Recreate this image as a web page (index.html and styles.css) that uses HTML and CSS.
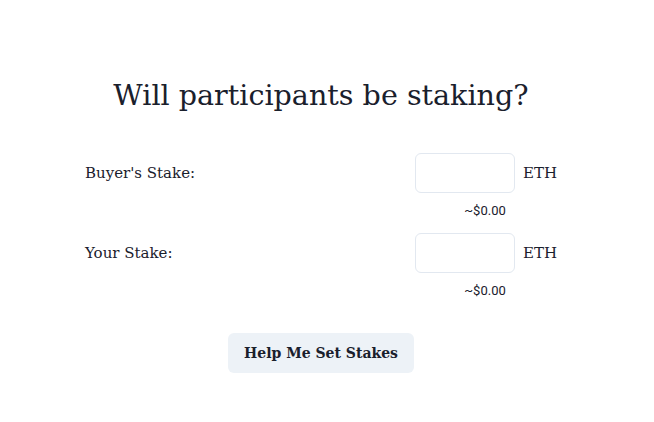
FILE: index.html
```html
<!DOCTYPE html>
<html>
<head>
<meta charset="utf-8">
<link rel="stylesheet" href="styles.css">
</head>
<body>
<main class="page">
  <h1 class="title">Will participants be staking?</h1>
  <div class="rows">
    <div class="row">
      <div class="label">Buyer's Stake:</div>
      <div class="field">
        <div class="input-line">
          <input class="input" type="text">
          <span class="unit">ETH</span>
        </div>
        <div class="usd">~$0.00</div>
      </div>
    </div>
    <div class="row">
      <div class="label">Your Stake:</div>
      <div class="field">
        <div class="input-line">
          <input class="input" type="text">
          <span class="unit">ETH</span>
        </div>
        <div class="usd">~$0.00</div>
      </div>
    </div>
  </div>
  <div class="actions">
    <button class="btn">Help Me Set Stakes</button>
  </div>
</main>
</body>
</html>
```

FILE: styles.css
```css
* { box-sizing: border-box; }
html, body { margin: 0; padding: 0; background: #fff; }
body {
  font-family: "DejaVu Serif", "Liberation Serif", serif;
  color: #1a202c;
  width: 642px;
}
.page {
  display: flex;
  flex-direction: column;
  align-items: center;
  padding-top: 74px;
}
.title {
  margin: 0;
  font-weight: 400;
  font-size: 28.6px;
  line-height: 42px;
  letter-spacing: 0;
}
.rows {
  width: 472px;
  margin-top: 37px;
  display: flex;
  flex-direction: column;
}
.row {
  display: flex;
  justify-content: space-between;
  align-items: flex-start;
  height: 80px;
}
.label {
  font-size: 15px;
  line-height: 40px;
}
.field {
  display: flex;
  flex-direction: column;
  width: 142px;
}
.input-line {
  display: flex;
  align-items: center;
  gap: 8px;
}
.input {
  width: 100px;
  height: 40px;
  border: 1px solid #e2e8f0;
  border-radius: 6px;
  padding: 0 12px;
  outline: none;
  background: #fff;
}
.unit {
  font-size: 15px;
}
.usd {
  width: 140px;
  text-align: center;
  font-family: Roboto, "Liberation Sans", sans-serif;
  font-size: 13px;
  line-height: 15px;
  margin-top: 10px;
  color: #1a202c;
}
.actions {
  margin-top: 20px;
}
.btn {
  font-family: "DejaVu Serif", "Liberation Serif", serif;
  font-weight: 700;
  font-size: 14px;
  color: #1a202c;
  background: #edf2f7;
  border: none;
  border-radius: 6px;
  height: 40px;
  padding: 0 16px;
}
```
